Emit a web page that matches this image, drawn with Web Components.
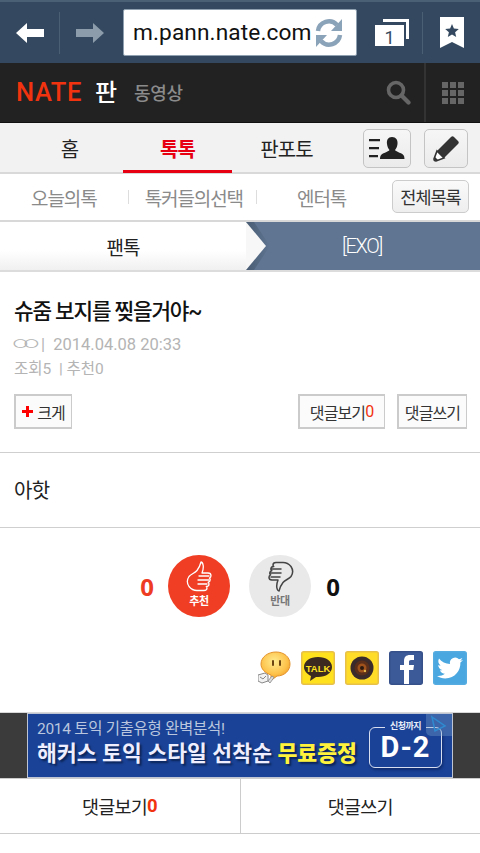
<!DOCTYPE html>
<html lang="ko"><head><meta charset="utf-8"><title>NATE 판</title>
<style>
html,body{margin:0;padding:0;background:#fff;font-family:Roboto,"Noto Sans CJK KR",sans-serif;}
body{width:480px;height:853px;overflow:hidden;display:flex;flex-direction:column}
</style></head><body>
<browser-bar></browser-bar>
<nate-header></nate-header>
<main-tabs></main-tabs>
<sub-nav></sub-nav>
<bread-crumb></bread-crumb>
<post-head></post-head>
<post-body>아핫</post-body>
<vote-box></vote-box>
<share-row></share-row>
<ad-banner></ad-banner>
<bottom-bar></bottom-bar>
<script>
const KR='Roboto,"Noto Sans CJK KR",sans-serif';
function def(name,html){customElements.define(name,class extends HTMLElement{constructor(){super();this.attachShadow({mode:'open'}).innerHTML=html;}});}
def('browser-bar',`<style>
:host{display:flex;align-items:center;height:63px;box-sizing:border-box;background:#34495f;border-top:2px solid #4a6074;flex:none}
.b{display:flex;align-items:center;justify-content:center;flex:none;height:100%}
.sep{width:1px;height:42px;background:#4b5f74;flex:none}
.url{width:234px;height:47px;box-sizing:border-box;background:#fff;border-radius:2px;border:1px solid #8fa0b0;display:flex;align-items:center;padding-left:9px;margin:0 0 0 3px;flex:none;font:22.700px/1.2 Roboto,sans-serif;color:#111;letter-spacing:.1px}
.url span{width:178px;white-space:nowrap;flex:none}
.url svg{margin-left:3px;flex:none}
</style>
<div class="b" style="width:59px"><svg width="30" height="22" viewBox="0 0 30 22"><path d="M1 11 12 1v6h17v8H12v6z" fill="#fff"/></svg></div>
<div class="sep"></div>
<div class="b" style="width:60px"><svg width="30" height="20" viewBox="0 0 30 20"><path d="M29 10 18 0v6H1v8h17v6z" fill="#8c9cab"/></svg></div>
<div class="url"><span>m.pann.nate.com</span><svg width="30" height="30" viewBox="0 0 30 30" fill="none"><path d="M4 13A11 11 0 0 1 23 7" stroke="#8ba3b8" stroke-width="4.500"/><path d="M26 17A11 11 0 0 1 7 23" stroke="#8ba3b8" stroke-width="4.500"/><path d="M28 1v12H17zM2 29V17h11z" fill="#8ba3b8"/></svg></div>
<div class="b" style="width:65px;padding-left:4px;box-sizing:border-box"><svg width="36" height="36" viewBox="0 -4 36 36"><path d="M9 0h26v20h-3V3H9z" fill="#fff"/><path d="M1 6h29v21H1z" fill="#fff"/><text x="15.500" y="24.500" font-family="Roboto,sans-serif" font-size="18" text-anchor="middle" fill="#34495f">1</text></svg></div>
<div class="sep"></div>
<div class="b" style="width:58px"><svg width="24" height="31" viewBox="0 0 24 31"><path d="M0 0h24v31l-12-6-12 6z" fill="#fff"/><path d="m12 7 1.900 4.600 4.900.4-3.700 3.200 1.100 4.800L12 17.500 7.800 20l1.100-4.800L5.200 12l4.900-.4z" fill="#34495f"/></svg></div>`);

def('nate-header',`<style>
:host{display:flex;align-items:center;height:60px;box-sizing:border-box;background:#222;border-bottom:1px solid #111;flex:none;font-family:${KR};padding-left:16px;position:relative}
.logo{font:500 25.500px/1 Roboto,sans-serif;color:#f2330f;letter-spacing:.6px;width:69px;white-space:nowrap;padding-top:1px}
.pan{color:#fff;font-size:24px;font-weight:500;margin-left:10px;line-height:1}
.vid{color:#8b8b8b;font-size:18px;font-weight:500;margin-left:17px;letter-spacing:-.4px;line-height:1;padding-top:2px}
.sp{flex:1}
.s{width:38px;display:flex}
.sep{width:2px;height:100%;background:#333;flex:none}
.g{width:54px;display:flex;justify-content:center;align-items:center;flex:none}
</style>
<span class="logo">NATE</span><span class="pan">판</span><span class="vid">동영상</span><span class="sp"></span>
<div class="s"><svg width="25" height="25" viewBox="0 0 25 25" fill="none"><circle cx="10" cy="10" r="7.500" stroke="#666" stroke-width="3.600"/><path d="m15.500 15.500 7 7" stroke="#666" stroke-width="4.200" stroke-linecap="round"/></svg></div>
<div class="sep"></div>
<div class="g"><svg width="22" height="22" viewBox="0 0 22 22" fill="#666"><path d="M0 0h6v6H0zM8 0h6v6H8zM16 0h6v6h-6zM0 8h6v6H0zM8 8h6v6H8zM16 8h6v6h-6zM0 16h6v6H0zM8 16h6v6H8zM16 16h6v6h-6z"/></svg></div>`);

def('main-tabs',`<style>
:host{display:flex;height:51px;box-sizing:border-box;background:#f2f2f2;border-bottom:2px solid #d9d9d9;flex:none;font-family:${KR};font-size:20px;letter-spacing:-.9px;color:#222;align-items:stretch}
a{display:flex;align-items:center;justify-content:center;width:109px;box-sizing:border-box;flex:none;padding-top:1px}
a.on{color:#e60012;font-weight:700;box-shadow:inset 0 -3px 0 #e60012;margin-bottom:-1px}
.sp{flex:1}
.ib{box-sizing:border-box;height:39px;margin-top:6px;border:1px solid #c4c4c4;border-radius:5px;background:linear-gradient(#f6f6f6,#ebebeb);display:flex;align-items:center;justify-content:center;flex:none}
</style>
<span style="width:15px;flex:none"></span><a>홈</a><a class="on" style="margin-left:-1px">톡톡</a><a>판포토</a><span class="sp"></span>
<div class="ib" style="width:48px"><svg width="36" height="25" viewBox="0 0 36 25"><path d="M0 3h11v2.200H0zM0 11h10v2.200H0zM0 19h9v2.200H0z" fill="#222"/><path d="M23 1c4 0 6 3 5.500 7-.3 3-1.500 5-2.500 6 1 2 8 3 9 6 .4 1 .5 3 .5 3H11s0-2 .5-3c1-3 8-4 9-6-1-1-2.200-3-2.500-6C17.500 4 19 1 23 1z" fill="#222"/></svg></div>
<span style="width:13px;flex:none"></span>
<div class="ib" style="width:44px"><svg width="27" height="27" viewBox="0 0 27 27"><path d="M18 2c1-1 2-1 3 0l4 4c1 1 1 2 0 3L11 23 4 16z" fill="#333"/><path d="M4 16l7 7-8 3c-1 0-2-1-2-2z" fill="#fff" stroke="#333" stroke-width="1.600"/><path d="M1 26l1-4 3 3z" fill="#333"/></svg></div>
<span style="width:12px;flex:none"></span>`);

def('sub-nav',`<style>
:host{display:flex;align-items:center;height:48px;box-sizing:border-box;background:#fff;border-bottom:2px solid #d8d8d8;flex:none;font-family:${KR};font-size:19px;letter-spacing:-1.100px;color:#8a8a8a;white-space:nowrap;padding-left:31px}
span{flex:none}
.sep{width:1px;height:14px;background:#ddd;flex:none}
.all{box-sizing:border-box;width:77px;height:33px;margin-top:-2px;border:1px solid #ccc;border-radius:5px;background:linear-gradient(#fafafa,#eee);color:#333;font-size:17.500px;letter-spacing:-1px;display:flex;align-items:center;justify-content:center;flex:none;margin-left:45px}
</style>
<span style="width:97px">오늘의톡</span><span class="sep"></span><span style="width:114px;text-align:right">톡커들의선택</span><span class="sep" style="margin-left:13px"></span><span style="margin-left:40px;width:50px">엔터톡</span><span class="all">전체목록</span>`);

def('bread-crumb',`<style>
:host{display:flex;height:50px;box-sizing:border-box;flex:none;font-family:${KR};font-size:19px;letter-spacing:-1px;position:relative;background:#5f7591;border-bottom:2px solid #dcdcdc}
.l{width:246px;flex:none;display:flex;align-items:center;justify-content:center;background:linear-gradient(#fff 60%,#f0f0f0);color:#222;box-sizing:border-box}
.r{flex:1;display:flex;align-items:center;justify-content:center;color:#fff;font-weight:300;font-size:20px;letter-spacing:-1.300px;padding-right:2px}
svg{position:absolute;left:246px;top:0}
</style>
<div class="l">팬톡</div><svg width="24" height="48" viewBox="0 0 24 48"><defs><linearGradient id="s" x1="0" x2="1"><stop offset="0" stop-color="#3f5166" stop-opacity=".7"/><stop offset="1" stop-color="#3f5166" stop-opacity="0"/></linearGradient></defs><path d="M0 0h8L24 24 8 48H0z" fill="url(#s)"/><path d="M0 0 20 24 0 48z" fill="#f7f7f7"/></svg><div class="r">[EXO]</div>`);

def('post-head',`<style>
:host{display:block;height:181px;box-sizing:border-box;flex:none;font-family:${KR};border-bottom:1px solid #cfcfcf;padding:26px 13px 0 14px;color:#111}
h1{margin:0;font-size:21.300px;line-height:28px;font-weight:500;letter-spacing:-1.150px;white-space:nowrap}
.m{color:#b4b4b4;font-size:16.500px;line-height:25px;white-space:nowrap}
.m1{margin-top:6px;display:flex}
.o{display:block;width:30px;flex:none;transform:scaleX(1.5);transform-origin:left center;letter-spacing:-7.800px;margin-left:-5px;margin-right:2px;font-weight:300}
.r{display:flex;margin-top:12px;gap:12px}
.sp{flex:1}
.b{box-sizing:border-box;height:35px;border:1px solid #cbcbcb;border-width:2px 1px 2px 2px;background:#fbfbfb;font-size:16px;letter-spacing:-.9px;color:#333;display:flex;align-items:center;justify-content:center;white-space:nowrap}
i{font-style:normal;color:#f2330f;letter-spacing:0}
</style>
<h1>슈줌 보지를 찢을거야~</h1>
<div class="m m1"><span class="o">ㅇㅇ</span><span>|&nbsp; 2014.04.08 20:33</span></div>
<div class="m" style="font-size:15.500px">조회5 &nbsp;|&nbsp;추천0</div>
<div class="r"><div class="b" style="width:58px"><svg width="11" height="11" viewBox="0 0 11 11" style="margin-right:4px"><path d="M4 0h3v4h4v3H7v4H4V7H0V4h4z" fill="#f00"/></svg>크게</div><span class="sp"></span><div class="b" style="width:87px">댓글보기<i>0</i></div><div class="b" style="width:70px">댓글쓰기</div></div>`);

customElements.define('post-body',class extends HTMLElement{constructor(){super();this.attachShadow({mode:'open'}).innerHTML=`<style>
:host{display:flex;align-items:center;height:75px;box-sizing:border-box;flex:none;font-family:${KR};font-size:20px;letter-spacing:-.6px;color:#222;border-bottom:1px solid #cfcfcf;padding:0 0 2px 14px}
</style><slot></slot>`;}});

def('vote-box',`<style>
:host{display:flex;align-items:center;justify-content:center;height:118px;box-sizing:border-box;flex:none;font-family:${KR};padding-bottom:2px}
.n{font:700 24px/1 "Open Sans",Roboto,sans-serif;width:20px;text-align:center;padding-top:2px}
.c{box-sizing:border-box;width:62px;height:62px;border-radius:50%;display:flex;flex-direction:column;align-items:center;font-size:11px;font-weight:700;letter-spacing:-.4px;line-height:12px;padding-top:6px}
.c svg{display:block;margin-bottom:4px}
</style>
<span class="n" style="color:#ee3c23">0</span>
<div class="c" style="background:#ef3e23;color:#fff;margin-left:11px;margin-right:19px"><svg width="27" height="31" viewBox="0 0 27 31" fill="none" stroke="#fff" stroke-width="1.300" stroke-linejoin="round" stroke-linecap="round"><path d="M15 1c-1 4-2 6-4 8.500C9 12 5 13 3 15.500c-2 3-2 7 0 10 2 2.500 5 4 8 4h7c2 0 3-1 3-2.500 0-.7-.3-1.200-.7-1.500 1.500 0 2.700-1 2.700-2.500 0-.8-.4-1.400-.8-1.800 1.200-.3 2-1.200 2-2.400 0-.8-.3-1.300-.8-1.700 1-.4 1.600-1.300 1.600-2.300 0-1.500-1.300-2.800-3-2.800l-6 0c1-2.500 1.500-5 1.200-7.500C16.800 2 16 1 15 1z"/><path d="M13 15h10M12 19h11M12 23h9"/></svg>추천</div>
<div class="c" style="background:#e9e9e9;color:#777;margin-right:12px"><svg width="27" height="31" viewBox="0 0 27 31" fill="none" stroke="#444" stroke-width="1.500" stroke-linejoin="round" stroke-linecap="round"><path d="M12 30c1-4 2-6 4-8.500 2-2.500 6-3.500 8-6 2-3 2-7 0-10-2-2.500-5-4-8-4H9C7 1.500 6 2.500 6 4c0 .7.300 1.200.7 1.500C5.200 5.500 4 6.500 4 8c0 .8.400 1.400.8 1.800-1.200.3-2 1.200-2 2.400 0 .8.300 1.300.8 1.700-1 .4-1.600 1.300-1.600 2.300 0 1.500 1.300 2.800 3 2.800h6c-1 2.500-1.500 5-1.200 7.500.4 2.500 1.200 3.500 2.200 3.500z"/><path d="M4 8h10M3 12h11M4 16h9"/></svg>반대</div>
<span class="n" style="color:#111">0</span>`);

def('share-row',`<style>
:host{display:flex;justify-content:flex-end;height:66px;flex:none;padding:5px 13px 0 0;gap:10px;box-sizing:border-box;align-items:flex-start}
svg{display:block;flex:none}
</style>
<svg width="34" height="34" viewBox="0 0 34 34" style="margin-right:-1px"><defs><radialGradient id="e" cx=".45" cy=".35" r=".75"><stop offset="0" stop-color="#ffeb8f"/><stop offset=".6" stop-color="#fdc24a"/><stop offset="1" stop-color="#ec8e1a"/></radialGradient></defs><path d="M18 1c8 0 14 5 14 12s-6 12-13 12l-4 3c-1 1-2 0-2-1v-3C7 22 3 18 3 13 3 6 10 1 18 1z" fill="url(#e)" stroke="#e3922a"/><rect x="14" y="9" width="2" height="6" rx="1" fill="#6b4410"/><rect x="21" y="9" width="2" height="6" rx="1" fill="#6b4410"/><path d="M0 24l7-2 3 2v6l-6 2-4-2z" fill="#f2f2f2" stroke="#888"/><path d="M2 26l3 2 3-3" fill="none" stroke="#888"/><path d="M10 30l4-5 2 1.500-4 5.500z" fill="#ddd" stroke="#888" stroke-width=".8"/></svg>
<svg width="34" height="34" viewBox="0 0 34 34"><rect x=".75" y=".75" width="32.500" height="32.500" rx="2" fill="#ffe11e" stroke="#e7c04a" stroke-width="1.500"/><path d="M17 6c8 0 14 4 14 10s-6 10-14 10h-2l-6 4 1-5c-4-2-7-5-7-9C3 10 9 6 17 6z" fill="#3c2a20"/><text x="17" y="20.500" text-anchor="middle" font-family="'Liberation Sans',sans-serif" font-weight="700" font-size="9.500" fill="#ffe11e">TALK</text></svg>
<svg width="34" height="34" viewBox="0 0 34 34"><rect x=".75" y=".75" width="32.500" height="32.500" rx="2" fill="#ffdc28" stroke="#e7c04a" stroke-width="1.500"/><circle cx="17" cy="17" r="11.500" fill="#3b2b2b"/><circle cx="17" cy="17" r="7.500" fill="#5b2f1a"/><circle cx="17" cy="17" r="4.500" fill="#a0521c"/><circle cx="17" cy="17" r="2" fill="#2a1a10"/><circle cx="20" cy="20" r="1.200" fill="#e7b84a"/></svg>
<svg width="34" height="34" viewBox="0 0 34 34"><rect x=".75" y=".75" width="32.500" height="32.500" rx="2" fill="#3d5a98" stroke="#36508a" stroke-width="1.500"/><path d="M15 33V19h-4v-5h4v-4c0-4 2-6 6-6h4v5h-3c-1.500 0-2 .7-2 2v3h5l-.7 5H20v14z" fill="#fff"/></svg>
<svg width="34" height="34" viewBox="0 0 34 34"><rect x=".75" y=".75" width="32.500" height="32.500" rx="2" fill="#4aa7e0" stroke="#55ace0" stroke-width="1.500"/><path d="M30 9c-1 .5-2 .7-3 .8 1-.6 2-1.600 2.300-2.800-1 .6-2.200 1-3.300 1.300a5.300 5.300 0 0 0-9 4.800C12.500 12.900 8.500 10.800 6 7.500c-1.400 2.400-.7 5.400 1.600 7-.9 0-1.700-.3-2.400-.6 0 2.500 1.800 4.700 4.200 5.200-.8.200-1.600.2-2.400.1.700 2 2.600 3.500 4.900 3.600-2.200 1.700-5 2.500-7.900 2.200 2.400 1.500 5.200 2.400 8.200 2.400 10 0 15.600-8.400 15.200-16 1.100-.7 2-1.600 2.600-2.400z" fill="#fff"/></svg>`);

def('ad-banner',`<style>
:host{display:flex;justify-content:center;height:67px;box-sizing:border-box;background:#3b3b3b;flex:none;border-top:1px solid #d8d8d8;border-bottom:1px solid #ccc;font-family:${KR}}
.a{width:426px;box-sizing:border-box;background:#1a4296;border:1px solid #bfc5d2;position:relative;color:#fff;white-space:nowrap;overflow:hidden;padding:5px 0 0 9px}
.t1{font-size:15.500px;line-height:20px;color:#b9c6de;letter-spacing:-.3px}
.t2{font-size:21.500px;line-height:26px;font-weight:700;letter-spacing:.1px;margin-top:2px;text-shadow:2px 2px 2px #0b2355;color:#eef}
.t2 b{color:#fff23c}
.d{position:absolute;left:341px;top:13px;width:73px;height:41px;box-sizing:border-box;border:1px solid #d7def0;border-radius:6px;text-align:center;font:700 29px/38px Roboto,sans-serif;letter-spacing:1px;box-shadow:1px 2px 3px #0f2c6e}
.s{position:absolute;left:357px;top:6px;font-size:9px;line-height:13px;font-weight:700;background:#1a4296;padding:0 3px;letter-spacing:-.5px;color:#e6ecf8;width:35px;text-align:center}
.ic{position:absolute;right:0;top:0;width:26px;height:22px;background:rgba(130,170,210,.35);border-radius:0 0 0 5px}
</style><div class="a"><div class="t1">2014 토익 기출유형 완벽분석!</div><div class="t2">해커스 토익 스타일 선착순 <b>무료증정</b></div><div class="d">D-2</div><div class="s">신청까지</div><div class="ic"><svg width="26" height="22" viewBox="0 0 26 22" fill="none"><path d="M6 3l13 9-10 5z" stroke="#2f8ad0" stroke-width="1.500"/></svg></div></div>`);

def('bottom-bar',`<style>
:host{display:flex;height:55px;box-sizing:border-box;flex:none;border-bottom:1px solid #ccc;font-family:${KR};font-size:18.500px;letter-spacing:-.8px;color:#222}
div{flex:1;display:flex;align-items:center;justify-content:center}
div+div{border-left:1px solid #ccc;box-sizing:border-box}
b{color:#f2330f;letter-spacing:0;font-weight:700}
</style><div>댓글보기<b>0</b></div><div>댓글쓰기</div>`);
</script></body></html>
